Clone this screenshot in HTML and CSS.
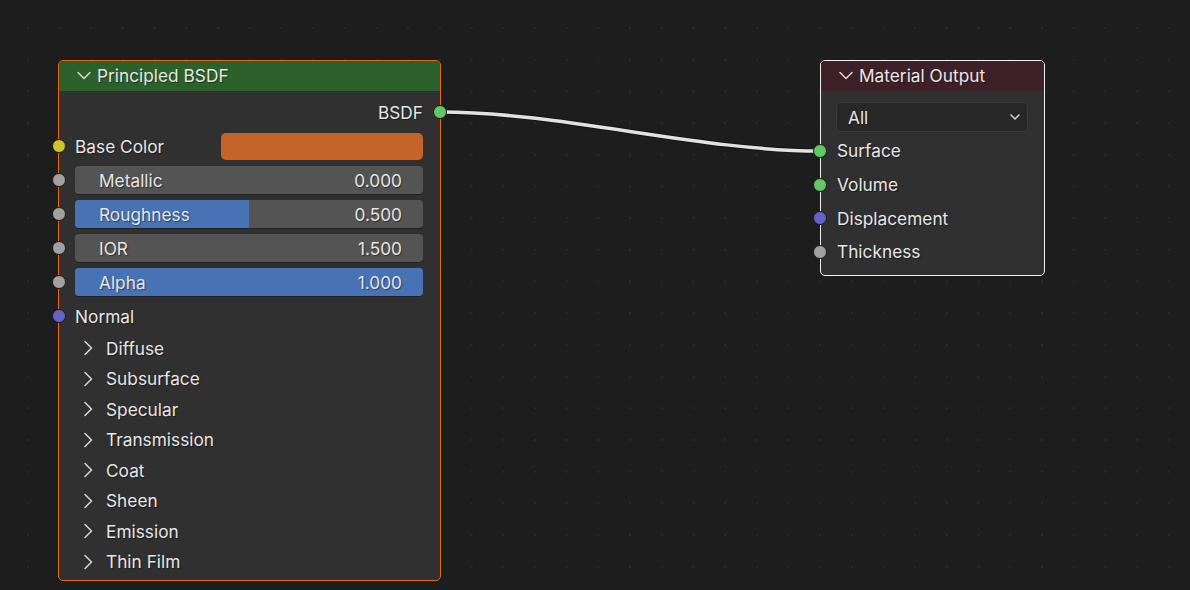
FILE: index.html
```html
<!DOCTYPE html>
<html lang="en">
<head>
    <meta charset="UTF-8">
    <title>Shader Editor</title>
    <link rel="stylesheet" href="styles.css">
</head>
<body>

    <div class="canvas">

        <!-- link BSDF -> Surface -->
        <svg class="links" width="1190" height="590" viewBox="0 0 1190 590">
            <path class="link-shadow" d="M441 112 C 560 112, 700 151, 820 151"/>
            <path class="link" d="M441 112 C 560 112, 700 151, 820 151"/>
        </svg>

        <div class="node node-bsdf">
            <div class="node-header">
                <svg class="chevron" width="14" height="14" viewBox="0 0 14 14"><path d="M1 3.5 L7 9.5 L13 3.5"/></svg>
                <span>Principled BSDF</span>
            </div>
            <div class="node-body">
                <div class="row row-output">
                    <span>BSDF</span>
                    <span class="socket socket-out green"></span>
                </div>
                <div class="row">
                    <span class="socket yellow"></span>
                    <span class="row-label">Base Color</span>
                    <span class="swatch"></span>
                </div>
                <div class="row">
                    <span class="socket grey"></span>
                    <div class="field">
                        <span>Metallic</span><span>0.000</span>
                    </div>
                </div>
                <div class="row">
                    <span class="socket grey"></span>
                    <div class="field">
                        <div class="fill" style="width: 50%;"></div>
                        <span>Roughness</span><span>0.500</span>
                    </div>
                </div>
                <div class="row">
                    <span class="socket grey"></span>
                    <div class="field">
                        <span>IOR</span><span>1.500</span>
                    </div>
                </div>
                <div class="row">
                    <span class="socket grey"></span>
                    <div class="field">
                        <div class="fill" style="width: 100%;"></div>
                        <span>Alpha</span><span>1.000</span>
                    </div>
                </div>
                <div class="row">
                    <span class="socket purple"></span>
                    <span class="row-label">Normal</span>
                </div>

                <div class="panels">
                    <div class="panel"><svg class="arrow" width="10" height="16" viewBox="0 0 10 16"><path d="M2 1.5 L8.5 8 L2 14.5"/></svg>Diffuse</div>
                    <div class="panel"><svg class="arrow" width="10" height="16" viewBox="0 0 10 16"><path d="M2 1.5 L8.5 8 L2 14.5"/></svg>Subsurface</div>
                    <div class="panel"><svg class="arrow" width="10" height="16" viewBox="0 0 10 16"><path d="M2 1.5 L8.5 8 L2 14.5"/></svg>Specular</div>
                    <div class="panel"><svg class="arrow" width="10" height="16" viewBox="0 0 10 16"><path d="M2 1.5 L8.5 8 L2 14.5"/></svg>Transmission</div>
                    <div class="panel"><svg class="arrow" width="10" height="16" viewBox="0 0 10 16"><path d="M2 1.5 L8.5 8 L2 14.5"/></svg>Coat</div>
                    <div class="panel"><svg class="arrow" width="10" height="16" viewBox="0 0 10 16"><path d="M2 1.5 L8.5 8 L2 14.5"/></svg>Sheen</div>
                    <div class="panel"><svg class="arrow" width="10" height="16" viewBox="0 0 10 16"><path d="M2 1.5 L8.5 8 L2 14.5"/></svg>Emission</div>
                    <div class="panel"><svg class="arrow" width="10" height="16" viewBox="0 0 10 16"><path d="M2 1.5 L8.5 8 L2 14.5"/></svg>Thin Film</div>
                </div>
            </div>
        </div>

        <div class="node node-output">
            <div class="node-header">
                <svg class="chevron" width="14" height="14" viewBox="0 0 14 14"><path d="M1 3.5 L7 9.5 L13 3.5"/></svg>
                <span>Material Output</span>
            </div>
            <div class="node-body">
                <div class="dropdown">
                    <span>All</span>
                    <svg width="12" height="10" viewBox="0 0 12 10"><path d="M2 3 L6 7 L10 3"/></svg>
                </div>
                <div class="out-row"><span class="socket green"></span>Surface</div>
                <div class="out-row"><span class="socket green"></span>Volume</div>
                <div class="out-row"><span class="socket purple"></span>Displacement</div>
                <div class="out-row"><span class="socket grey"></span>Thickness</div>
            </div>
        </div>

    </div>

</body>
</html>
```

FILE: styles.css
```css
body {
    margin: 0;
    padding: 0;
    background: #1d1d1d;
    font-family: 'Inter', 'Noto Sans', sans-serif;
    font-size: 17.3px;
    color: #e6e6e6;
}

.canvas {
    position: relative;
    width: 1190px;
    height: 590px;
    overflow: hidden;
    background-color: #1d1d1d;
    background-image: radial-gradient(circle, #2a2a2a 1px, transparent 1.3px);
    background-size: 31.7px 31.7px;
    background-position: 12.15px 12.15px;
    text-shadow: 1px 1px 1px rgba(0, 0, 0, 0.45);
}

.links {
    position: absolute;
    left: 0;
    top: 0;
}

.link-shadow {
    fill: none;
    stroke: #141414;
    stroke-width: 5.5;
}

.link {
    fill: none;
    stroke: #e2e2e2;
    stroke-width: 3.5;
}

/* nodes */

.node {
    position: absolute;
    top: 60px;
    background: #303030;
    border: 1px solid #ec6413;
    border-radius: 5px;
    box-sizing: border-box;
}

.node-bsdf {
    left: 58px;
    width: 383px;
    height: 521px;
}

.node-output {
    left: 820px;
    width: 225px;
    height: 216px;
    border-color: #f0f0f0;
}

.node-header {
    height: 29px;
    padding-bottom: 1px;
    display: flex;
    align-items: center;
    gap: 6px;
    padding-left: 18px;
    border-radius: 4px 4px 0 0;
    background: #2c612b;
    color: #e8e8e8;
}

.node-output .node-header {
    background: #3e2128;
}

.chevron path,
.arrow path,
.dropdown path {
    fill: none;
    stroke: #d8d8d8;
    stroke-width: 1.5;
    stroke-linecap: round;
    stroke-linejoin: round;
}

.node-bsdf .node-body {
    padding: 4px 17px 0 16px;
}

.row {
    position: relative;
    height: 34px;
    display: flex;
    align-items: center;
}

.row-output {
    justify-content: flex-end;
}

.row-label {
    flex: 1;
}

.socket {
    position: absolute;
    left: -23px;
    top: 50%;
    width: 12px;
    height: 12px;
    margin-top: -7px;
    border-radius: 50%;
    border: 1px solid #1b1b1b;
}

.socket-out {
    left: auto;
    right: -24px;
}

.green { background: #63c763; }
.yellow { background: #c7c729; }
.grey { background: #a1a1a1; }
.purple { background: #6363c7; }

.swatch {
    width: 202px;
    height: 27px;
    border-radius: 5px;
    background: #c46428;
}

.field {
    position: relative;
    flex: 1;
    height: 28px;
    display: flex;
    align-items: center;
    justify-content: space-between;
    padding: 0 21px 0 24px;
    border-radius: 4px;
    background: #545454;
    box-shadow: 0 1px 0 #222222;
    overflow: hidden;
}

.field span {
    position: relative;
}

.fill {
    position: absolute;
    left: 0;
    top: 0;
    bottom: 0;
    background: #4772b3;
}

.panel {
    height: 30.5px;
    display: flex;
    align-items: center;
    gap: 13px;
    padding-left: 8px;
}

/* material output */

.node-output .node-body {
    padding: 11px 16px 0 15px;
}

.dropdown {
    height: 30px;
    box-sizing: border-box;
    display: flex;
    align-items: center;
    justify-content: space-between;
    padding: 0 6px 0 11px;
    border-radius: 5px;
    background: #282828;
    border: 1px solid #3a3a3a;
    margin-bottom: 2px;
}

.out-row {
    position: relative;
    height: 33.7px;
    display: flex;
    align-items: center;
    padding-left: 1px;
}

.out-row .socket {
    left: -23px;
}
```
